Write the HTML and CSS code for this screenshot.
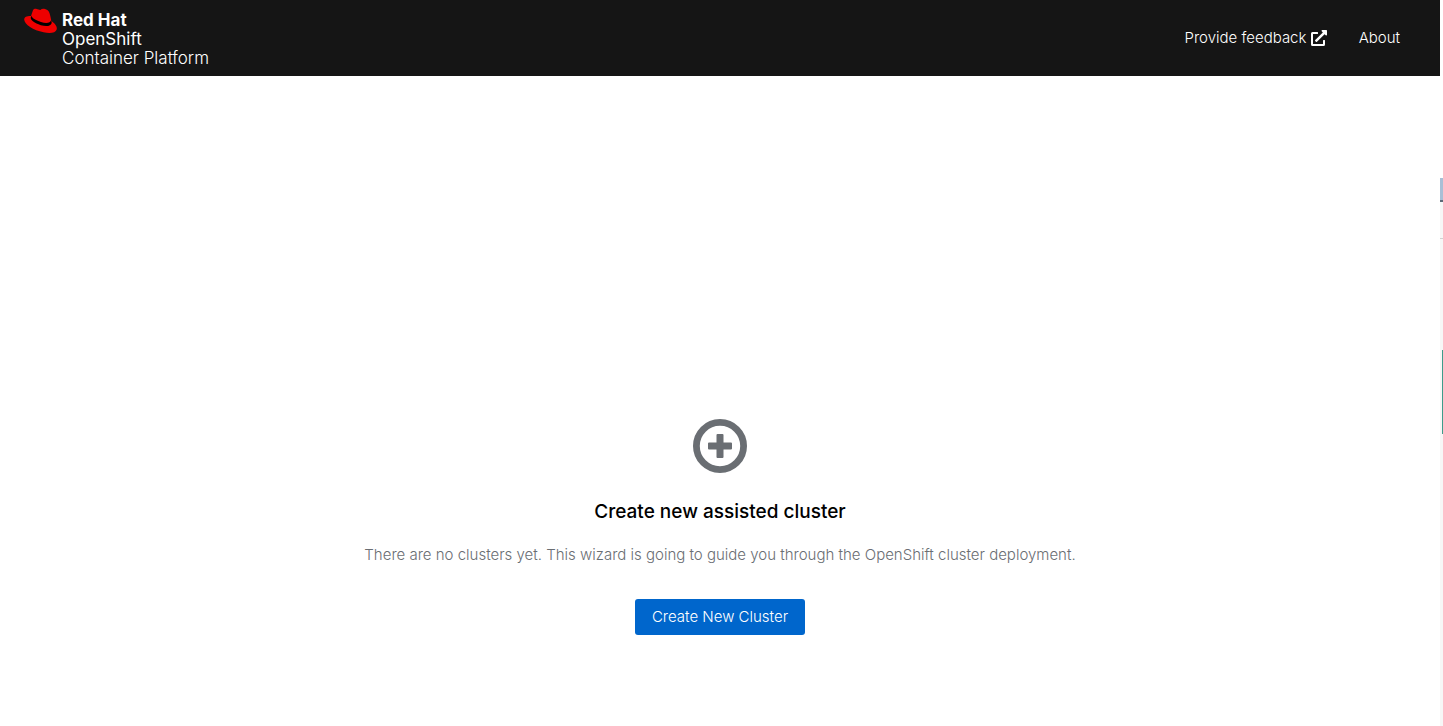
FILE: index.html
```html
<!DOCTYPE html>
<html lang="en">
<head>
<meta charset="utf-8">
<title>Red Hat OpenShift Container Platform</title>
<link rel="stylesheet" href="styles.css">
</head>
<body>
<div class="page">
  <header class="header">
    <a class="brand" href="#">
      <svg class="brand-hat" viewBox="0 0 34 26" aria-hidden="true">
        <path fill="#e00" d="M8.8 2.7C9.3.9 11 .5 12.700.9L16.300 1.900C17.500.8 19.300.5 21 1C24.800 2 25.500 4.200 26.300 8L27.400 13C31 15.500 33.600 18.900 32.700 21.500C31.600 25.100 25.800 25.700 19.500 24.300C9.500 22.300.2 16.300.2 11.500C.2 8.900 3 7.900 7 8Z"/>
        <path fill="#000" d="M7.400 7.600C7.700 10 11.500 12.400 17 14.100C21.900 15.600 26.500 15.400 27.200 12L27.700 14.900C27.200 18 22.500 18.800 16.800 17.200C10.600 15.400 6.200 12 6.800 9.600Z"/>
      </svg>
      <span class="brand-text">
        <strong class="brand-name">Red Hat</strong>
        <span class="brand-product">OpenShift</span>
        <span class="brand-edition">Container Platform</span>
      </span>
    </a>
    <nav class="tools">
      <a class="tool" href="#">Provide feedback
        <svg class="tool-icon" viewBox="0 0 512 512" aria-hidden="true"><path fill="currentColor" d="M432 320h-32a16 16 0 0 0-16 16v112H64V128h144a16 16 0 0 0 16-16V80a16 16 0 0 0-16-16H48a48 48 0 0 0-48 48v352a48 48 0 0 0 48 48h352a48 48 0 0 0 48-48V336a16 16 0 0 0-16-16zM488 0H360c-21.370 0-32.050 25.910-17 41l35.730 35.730L135 320.370a24 24 0 0 0 0 34L157.670 377a24 24 0 0 0 34 0l243.610-243.680L471 169c15 15 41 4.500 41-17V24a24 24 0 0 0-24-24z"/></svg></a>
      <a class="tool" href="#">About</a>
    </nav>
  </header>
  <main class="main">
    <section class="empty">
      <svg class="empty-icon" viewBox="0 0 54 54" aria-hidden="true">
        <circle cx="27" cy="27" r="23.600" fill="none" stroke="#6a6e73" stroke-width="6.800"/>
        <path fill="#6a6e73" d="M24.500 15h5a1 1 0 0 1 1 1v7.500H38a1 1 0 0 1 1 1v5a1 1 0 0 1-1 1h-7.500V38a1 1 0 0 1-1 1h-5a1 1 0 0 1-1-1v-7.500H16a1 1 0 0 1-1-1v-5a1 1 0 0 1 1-1h7.500V16a1 1 0 0 1 1-1z"/>
      </svg>
      <h1 class="empty-title">Create new assisted cluster</h1>
      <p class="empty-body">There are no clusters yet. This wizard is going to guide you through the OpenShift cluster deployment.</p>
      <button class="button" type="button">Create New Cluster</button>
    </section>
  </main>
</div>
<div class="edge">
  <div class="edge-top"></div>
  <div class="edge-panel"></div>
  <div class="edge-rule"></div>
  <div class="edge-accent"></div>
</div>
</body>
</html>
```
FILE: styles.css
```css
* { box-sizing: border-box; }

body {
  margin: 0;
  min-height: 100vh;
  display: flex;
  background: #fff;
  color: #151515;
  font-family: Inter, "Liberation Sans", sans-serif;
  font-size: 15px;
  line-height: 24px;
}

.page {
  flex: 1;
  display: flex;
  flex-direction: column;
}

.header {
  display: flex;
  justify-content: space-between;
  align-items: center;
  min-height: 76px;
  padding: 0 40px 0 24px;
  background: #151515;
}

.brand {
  display: flex;
  gap: 4px;
  padding-top: 2px;
  color: #fff;
  text-decoration: none;
}

.brand-hat {
  width: 34px;
  height: 26px;
  margin-top: -3px;
}

.brand-text {
  display: flex;
  flex-direction: column;
  font-size: 17px;
  line-height: 19px;
}

.brand-name { font-weight: 700; }
.brand-product { font-weight: 400; }
.brand-edition { font-weight: 300; }

.tools {
  display: flex;
  gap: 32px;
}

.tool {
  color: #fff;
  font-weight: 300;
  text-decoration: none;
}

.tool-icon {
  width: 16px;
  height: 16px;
  vertical-align: -3px;
}

.main {
  flex: 1;
  padding: 343px 24px 88px;
}

.empty {
  display: flex;
  flex-direction: column;
  align-items: center;
  text-align: center;
}

.empty-icon {
  width: 54px;
  height: 54px;
  margin-bottom: 24px;
}

.empty-title {
  margin: 0 0 16px;
  color: #000;
  font-size: 19px;
  font-weight: 500;
  line-height: 30px;
}

.empty-body {
  margin: 0 0 32px;
  color: #6a6e73;
  font-weight: 300;
}

.button {
  padding: 6px 17px;
  border: 0;
  border-radius: 3px;
  background: #06c;
  color: #fff;
  font: inherit;
  font-weight: 300;
}

.edge {
  flex: 0 0 3px;
  display: flex;
  flex-direction: column;
  background: #f7f7f7;
}

.edge-top {
  height: 178px;
  background: #fff;
}

.edge-panel {
  height: 24px;
  background: #a9bfd6;
  border-bottom: 2px solid #5d6b78;
}

.edge-rule {
  height: 37px;
  border-bottom: 1px solid #d2d2d2;
}

.edge-accent {
  height: 84px;
  margin: 111px 0 0 2px;
  background: #3d9c8b;
}
```
